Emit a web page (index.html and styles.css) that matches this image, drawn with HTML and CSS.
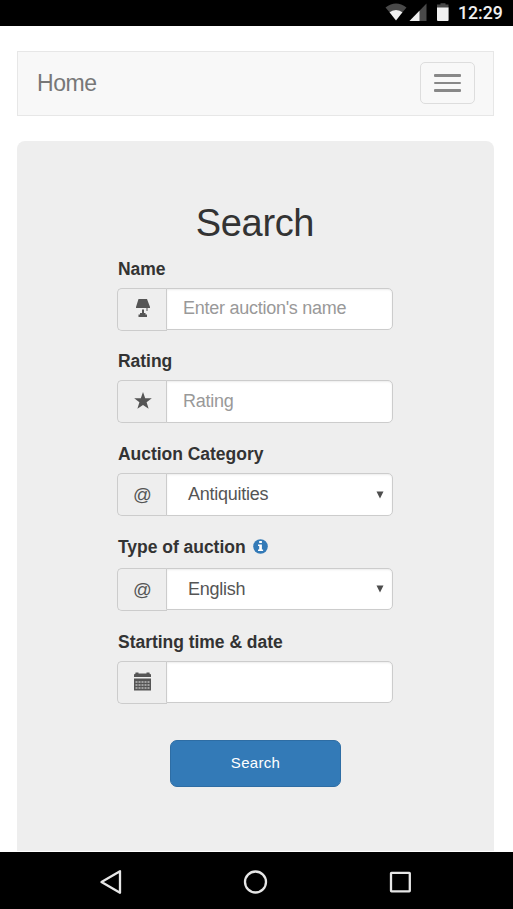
FILE: index.html
```html
<!DOCTYPE html>
<html lang="en">
<head>
<meta charset="utf-8">
<title>Search</title>
<link rel="stylesheet" href="styles.css">
</head>
<body>
<header class="status">
  <svg class="status-icons" width="70" height="26" viewBox="0 0 70 26">
    <path fill="#494949" d="M0.500 7.500Q11 -.5 21.500 7.500L17.500 12.300Q11 7.500 4.500 12.300Z"/>
    <path fill="#f0f0f0" d="M4.500 12.300Q11 7.500 17.500 12.300L11 20.500Z"/>
    <path fill="#494949" d="M41.500 3.500V21H24.500Z"/>
    <path fill="#f0f0f0" d="M34.500 10.700V21H24.500Z"/>
    <path fill="#494949" d="M55.500 3.300h5v1.200h3V8h-11.500V4.500h3.500z"/>
    <path fill="#f0f0f0" d="M52 7.500h11.600V20q0 1-1 1h-9.600q-1 0-1-1z"/>
  </svg>
  <span class="clock">12:29</span>
</header>
<main class="page">
  <nav class="navbar">
    <a class="brand">Home</a>
    <button class="toggle" type="button" aria-label="Menu"><span class="bar"></span><span class="bar thin"></span><span class="bar"></span></button>
  </nav>
  <section class="panel">
    <h1>Search</h1>
    <form class="form">
      <div class="field name">
        <label>Name</label>
        <div class="group">
          <span class="addon"><svg width="15" height="19" viewBox="0 0 15 19"><path fill="#555" d="M3.500 0h8.500L15 8v1h-2.500v3h-1V9H1V8zM7 10.500h2V14h1.500v1.500H12V18H3.500v-2.500H5V14h2z"/></svg></span>
          <div class="input placeholder">Enter auction's name</div>
        </div>
      </div>
      <div class="field rating">
        <label>Rating</label>
        <div class="group tall">
          <span class="addon"><svg width="18" height="18" viewBox="0 0 18 18"><path fill="#555" d="M9 0l2.200 6.200h6.600l-5.200 4 2 6.600L9 12.900l-5.600 3.900 2-6.600-5.200-4h6.600z"/></svg></span>
          <div class="input placeholder">Rating</div>
        </div>
      </div>
      <div class="field category">
        <label>Auction Category</label>
        <div class="group tall">
          <span class="addon at">@</span>
          <div class="input select"><span>Antiquities</span><svg width="8" height="8" viewBox="0 0 8 8"><path fill="#4d4d4d" d="M.5.500h7L4 7.500z"/></svg></div>
        </div>
      </div>
      <div class="field type">
        <label>Type of auction <svg class="info" width="15" height="15" viewBox="0 0 15 15"><circle cx="7.500" cy="7.500" r="7.300" fill="#337ab7"/><path fill="#fff" d="M6.200 2h2.700v2H6.200zM5 5.500h3.900v5h1.200v1.500H5v-1.500h1.200V7H5z"/></svg></label>
        <div class="group">
          <span class="addon at">@</span>
          <div class="input select"><span>English</span><svg width="8" height="8" viewBox="0 0 8 8"><path fill="#4d4d4d" d="M.5.500h7L4 7.500z"/></svg></div>
        </div>
      </div>
      <div class="field date">
        <label>Starting time &amp; date</label>
        <div class="group">
          <span class="addon"><svg width="17" height="19" viewBox="0 0 17 19"><path fill="#555" d="M0 5V2.500L1.500 1.500V.5h3v1h8v-1h3v1L17 2.500V5zM0 6.500h17V18.500H0z"/><path stroke="#eee" fill="none" d="M1.500 10h14.500M1.500 13h14.500M1.500 16h14.500" stroke-width="1.200" stroke-dasharray="2 1"/></svg></span>
          <div class="input"></div>
        </div>
      </div>
      <button class="submit" type="button">Search</button>
    </form>
  </section>
</main>
<footer class="softkeys">
  <svg width="24" height="26" viewBox="0 0 24 26"><path d="M21 2.200v21.600L2.500 13z"/></svg>
  <svg width="26" height="26" viewBox="0 0 26 26"><circle cx="12.500" cy="13" r="10.500"/></svg>
  <svg width="24" height="26" viewBox="0 0 24 26"><rect x="3" y="3.800" width="18.800" height="18.500" rx=".5"/></svg>
</footer>
</body>
</html>
```
FILE: styles.css
```css
* { box-sizing: border-box; }
body {
  margin: 0;
  height: 909px;
  display: flex;
  flex-direction: column;
  overflow: hidden;
  background: #fff;
  color: #333;
  font-family: "Liberation Sans", Arial, sans-serif;
}
svg { display: block; flex: none; }
.status {
  height: 26px;
  flex: none;
  display: flex;
  justify-content: flex-end;
  align-items: center;
  padding-right: 10px;
  background: #000;
}
.status-icons { margin-right: 3px; }
.clock {
  width: 45px;
  color: #f0f0f0;
  font: 500 17.700px/26px Roboto, sans-serif;
  white-space: nowrap;
}
.page {
  flex: 1;
  display: flex;
  flex-direction: column;
  gap: 25px;
  padding: 25px 19px 1px 17px;
}
.navbar {
  height: 65px;
  display: flex;
  justify-content: space-between;
  align-items: flex-start;
  padding: 10px 18px 0 19px;
  background: #f8f8f8;
  border: 1px solid #e7e7e7;
}
.brand { color: #777; font-size: 23px; line-height: 43px; letter-spacing: -.4px; }
.toggle {
  width: 55px;
  height: 42px;
  padding: 0;
  display: flex;
  flex-direction: column;
  align-items: center;
  justify-content: center;
  gap: 5px;
  background: transparent;
  border: 1px solid #ddd;
  border-radius: 5px;
}
.bar { width: 27px; height: 3px; border-radius: 1px; background: #888; }
.bar.thin { height: 2px; }
.panel {
  flex: 1;
  padding: 60px 101px 0 100px;
  background: #eee;
  border-radius: 8px 8px 0 0;
}
h1 {
  margin: 0;
  font-size: 38px;
  line-height: 44px;
  font-weight: 400;
  letter-spacing: -.35px;
  text-align: center;
}
.form { display: flex; flex-direction: column; }
.field { display: flex; flex-direction: column; padding-top: 13px; }
.name { height: 92px; }
.rating { height: 93px; }
.category { height: 94px; }
.type { height: 94px; padding-top: 12px; }
.date { height: 122px; }
label {
  display: flex;
  align-items: center;
  gap: 7px;
  height: 22px;
  margin: 0 0 8px 1px;
  font-size: 17.500px;
  line-height: 22px;
  font-weight: 700;
  letter-spacing: -.03px;
  white-space: nowrap;
}
.type label { margin-bottom: 10px; }
.info { margin-bottom: 1px; }
.group { display: flex; align-items: flex-start; height: 43px; }
.addon {
  width: 50px;
  height: 43px;
  flex: none;
  display: flex;
  align-items: center;
  justify-content: center;
  padding-bottom: 2px;
  border: 1px solid #ccc;
  border-right: 0;
  border-radius: 5px 0 0 5px;
  color: #555;
  font-size: 18px;
}
.at { padding-bottom: 0; font-size: 18.500px; }
.input {
  flex: 1;
  height: 42px;
  margin-left: -1px;
  padding-left: 16px;
  border: 1px solid #ccc;
  border-radius: 0 5px 5px 0;
  background: #fff;
  box-shadow: inset 0 1px 2px rgba(0, 0, 0, .08);
  color: #555;
  font-size: 18px;
  line-height: 39px;
  letter-spacing: -.26px;
  white-space: nowrap;
}
.tall .input, .date .input { height: 43px; line-height: 41px; }
.date .input { height: 42px; }
.placeholder { color: #999; }
.select {
  display: flex;
  align-items: center;
  justify-content: space-between;
  padding: 0 8px 0 21px;
}
.submit {
  width: 171px;
  height: 47px;
  margin-left: 53px;
  padding: 0 0 2px;
  background: #337ab7;
  border: 1px solid #2e6da4;
  border-radius: 7px;
  color: #fff;
  font: 15px "Liberation Sans", Arial, sans-serif;
  letter-spacing: .3px;
}
.softkeys {
  height: 57px;
  flex: none;
  display: flex;
  justify-content: space-between;
  align-items: center;
  padding: 2px 101px 0 99px;
  background: #000;
}
.softkeys svg { fill: none; stroke: #e6e6e6; stroke-width: 2.300; stroke-linejoin: round; }
```
